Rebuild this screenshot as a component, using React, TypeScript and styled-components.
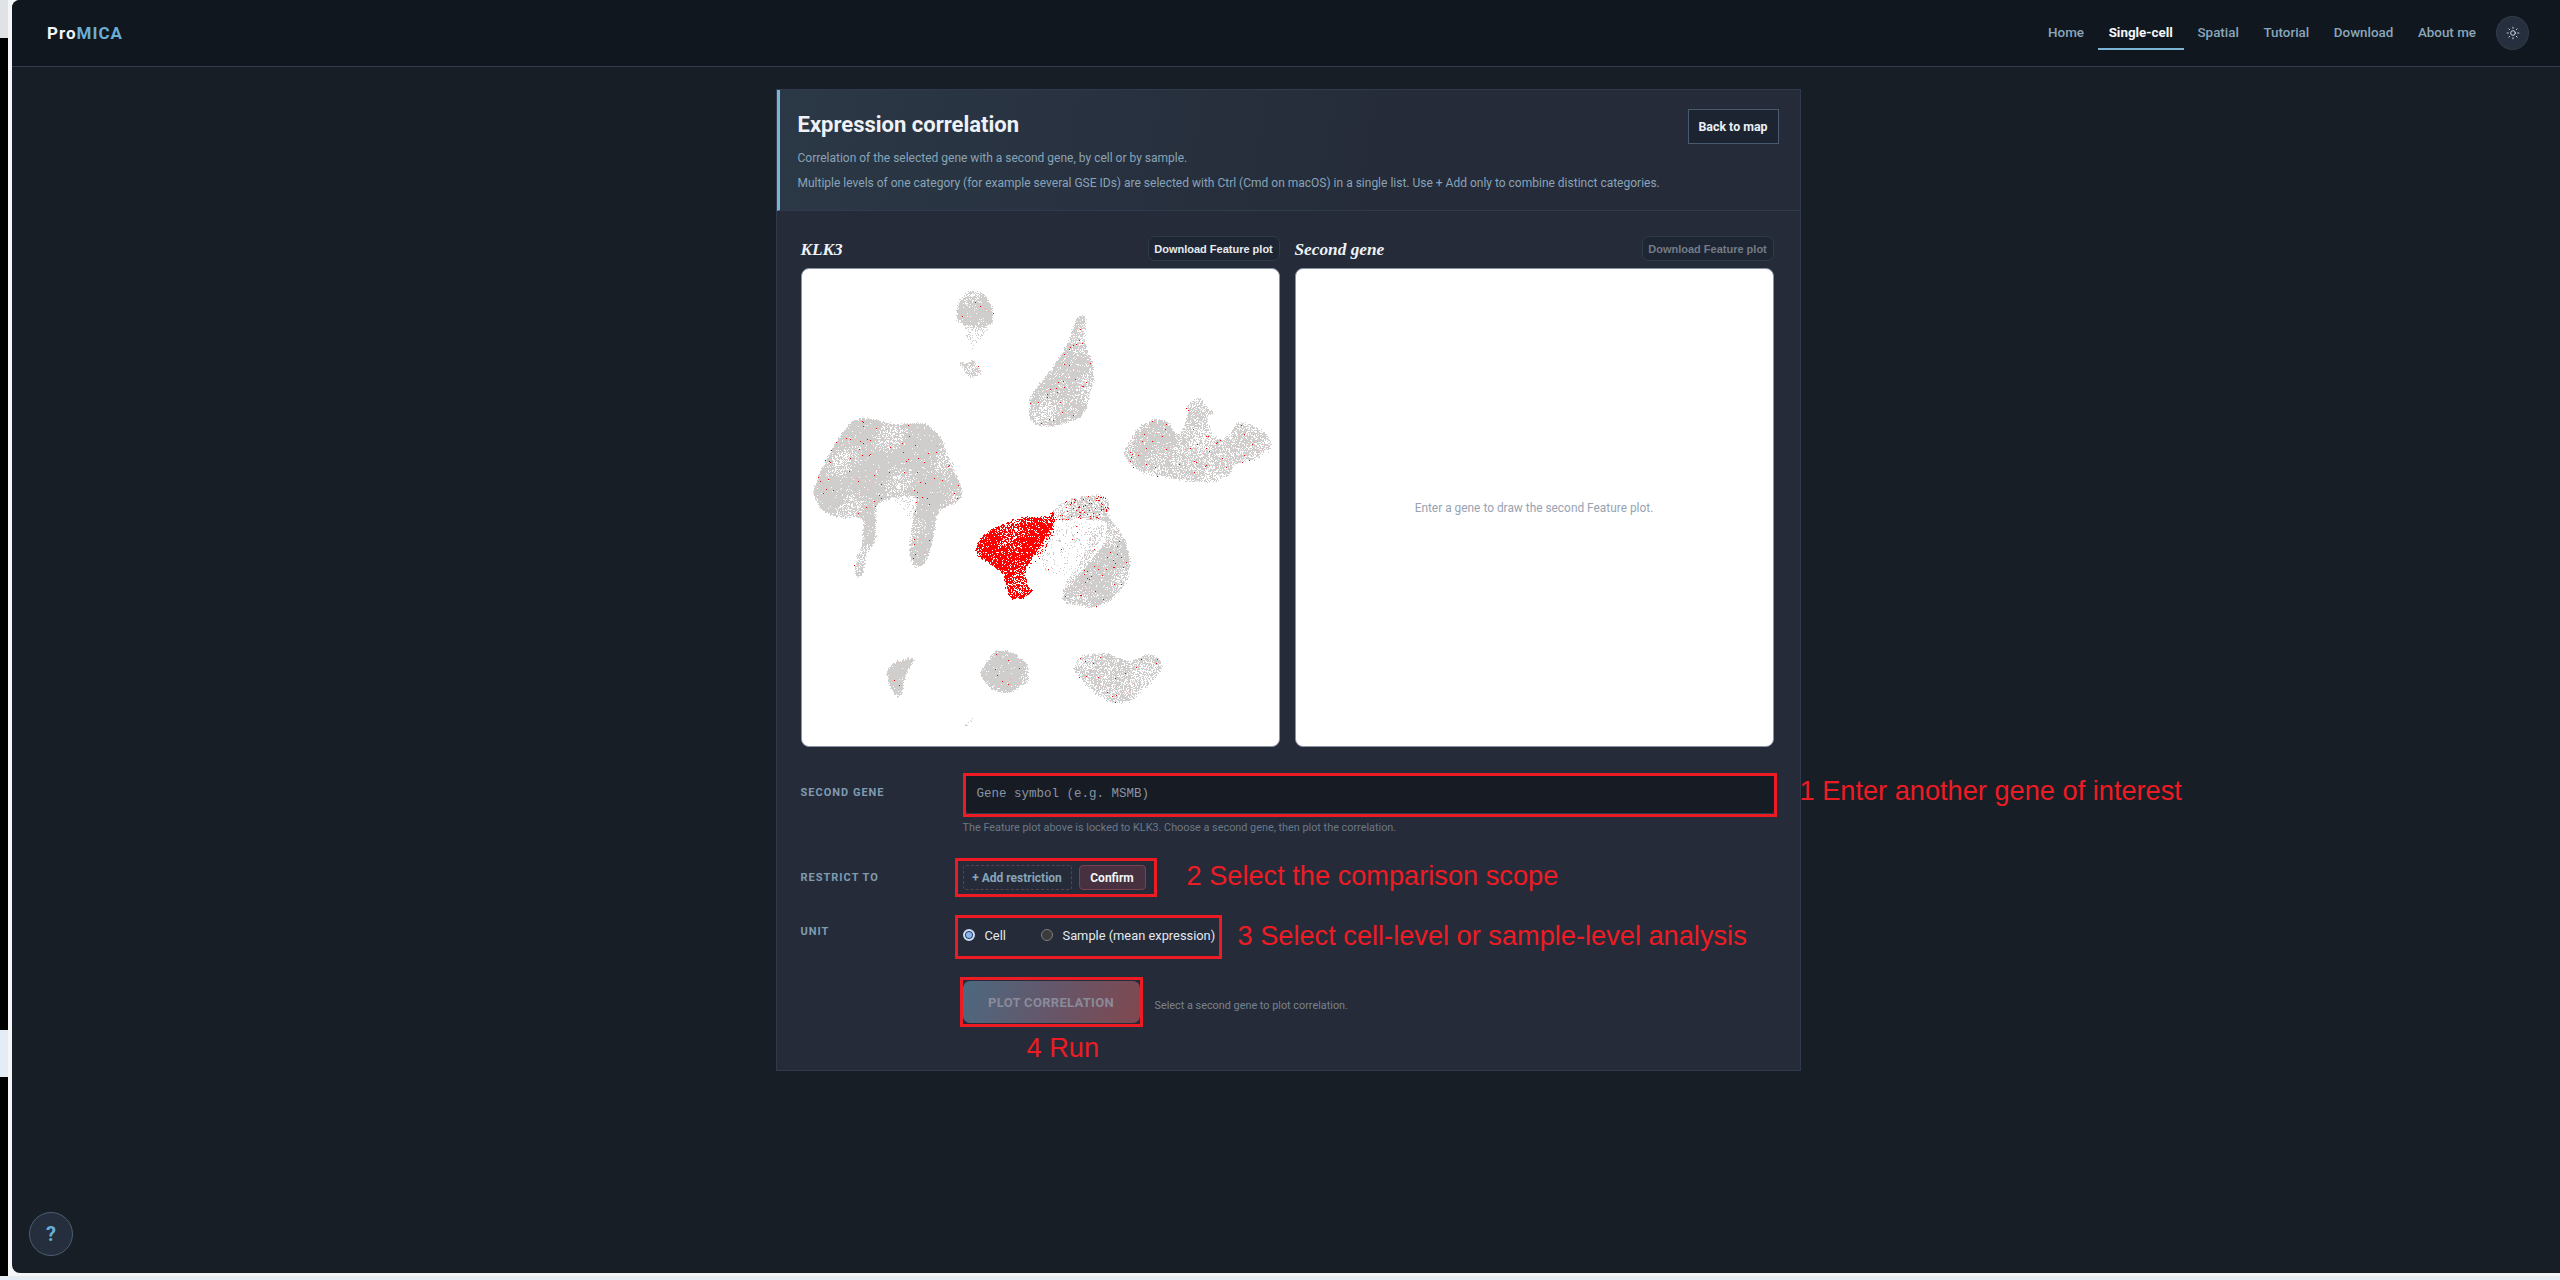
import { Sun } from 'lucide-react';
import styled, { createGlobalStyle } from 'styled-components';

const sans = 'Roboto, "Noto Sans", sans-serif';

const GlobalStyle = createGlobalStyle`
  html, body {
    margin: 0;
    padding: 0;
    background: #e4ecf5;
    overflow: hidden;
  }
  * {
    box-sizing: border-box;
  }
`;

const Screen = styled.div`
  width: 2560px;
  height: 1280px;
  display: flex;
  flex-direction: column;
  font-family: ${sans};
`;

const ScreenRow = styled.div`
  height: 1276px;
  display: flex;
  flex: none;
`;

const EdgeStrip = styled.div`
  width: 8px;
  flex: none;
  display: flex;
  flex-direction: column;
  background: #000;
`;

const EdgeTop = styled.div`
  height: 38px;
  background: #dfe3e6;
`;

const EdgeTab = styled.div`
  height: 47px;
  margin-top: 992px;
  background: #e4ecf5;
`;

const Frame = styled.div`
  flex: 1;
  background: #f4f6f8;
  padding: 0 0 3px 4px;
  display: flex;
`;

const Window = styled.div`
  flex: 1;
  display: flex;
  flex-direction: column;
  position: relative;
  border-radius: 8px 0 0 8px;
  overflow: hidden;
  background: #171e26;
`;

const Nav = styled.header`
  height: 67px;
  flex: none;
  display: flex;
  align-items: center;
  justify-content: space-between;
  padding: 0 31px 0 35px;
  background: #10171f;
  border-bottom: 1px solid #323b4e;
`;

const Brand = styled.div`
  font-size: 17px;
  font-weight: 700;
  letter-spacing: 1px;
  color: #f2f5f8;
  span {
    color: #6aaed6;
  }
`;

const NavRight = styled.div`
  display: flex;
  align-items: center;
`;

const NavLink = styled.a<{ $active?: boolean }>`
  height: 34px;
  display: flex;
  align-items: center;
  padding: 0 11px;
  margin-left: 2.6px;
  font-size: 13.4px;
  font-weight: ${(props) => (props.$active ? 700 : 500)};
  color: ${(props) => (props.$active ? '#f4f7fa' : '#8ba6bb')};
  border-bottom: 2px solid ${(props) => (props.$active ? '#7cb4d6' : 'transparent')};
`;

const ThemeButton = styled.button`
  width: 33px;
  height: 34px;
  margin-left: 9px;
  padding: 0;
  display: flex;
  align-items: center;
  justify-content: center;
  border-radius: 50%;
  color: #dfe6ec;
  background: #262f3d;
  border: 1px solid #303a4b;
`;

const Main = styled.main`
  flex: 1;
  display: flex;
  justify-content: center;
  padding: 22px 0 0 4px;
`;

const Card = styled.section`
  width: 1025px;
  height: 982px;
  background: #252b39;
  border: 1px solid #2f3b4c;
`;

const CardHeader = styled.div`
  height: 121px;
  display: flex;
  justify-content: space-between;
  padding: 19px 21px 0 18px;
  border-left: 3px solid #7cb4d6;
  border-bottom: 1px solid #2f3b4c;
  background: linear-gradient(100deg, #2b3846 0%, #252b39 60%);
`;

const Title = styled.h1`
  margin: 1px 0 9px;
  font-size: 22px;
  line-height: 30px;
  font-weight: 700;
  color: #eef2f6;
`;

const Lead = styled.p`
  margin: 0 0 7px;
  font-size: 12px;
  line-height: 18px;
  white-space: nowrap;
  color: #88a4b8;
`;

const BackButton = styled.button`
  width: 91px;
  height: 35px;
  flex: none;
  padding: 0;
  font-family: ${sans};
  font-size: 12.4px;
  font-weight: 700;
  white-space: nowrap;
  color: #eaf0f5;
  background: #1d2431;
  border: 1px solid #4a5a6e;
`;

const CardBody = styled.div`
  padding: 25px 25px 0 24px;
`;

const Plots = styled.div`
  display: grid;
  grid-template-columns: 479px 479px;
  gap: 15px;
  margin-bottom: 26px;
`;

const PlotHead = styled.div`
  height: 25px;
  margin-bottom: 7px;
  display: flex;
  align-items: center;
  justify-content: space-between;
`;

const PlotName = styled.h2`
  margin: 2px 0 0;
  font-family: 'Liberation Serif', serif;
  font-size: 17.3px;
  font-style: italic;
  font-weight: 700;
  color: #eef2f6;
`;

const DownloadButton = styled.button<{ disabled?: boolean }>`
  width: 132px;
  height: 25px;
  padding: 0;
  font-family: 'Liberation Sans', Arial, sans-serif;
  font-size: 11px;
  font-weight: 700;
  color: ${(props) => (props.disabled ? '#737b87' : '#e6ebf0')};
  background: #1f2633;
  border: 1px solid #2f3a4b;
  border-radius: 7px;
`;

const PlotBox = styled.div`
  width: 479px;
  height: 479px;
  display: flex;
  align-items: center;
  justify-content: center;
  background: #fff;
  border: 1px solid #8a93a5;
  border-radius: 8px;
  overflow: hidden;
  font-size: 11.9px;
  color: #98a3b3;
`;

const FormRow = styled.div<{ $top: number }>`
  display: grid;
  grid-template-columns: 162px 1fr;
  align-items: start;
  margin-top: ${(props) => props.$top}px;
`;

const FieldLabel = styled.label<{ $pad: number }>`
  padding-top: ${(props) => props.$pad}px;
  font-size: 11px;
  line-height: 14px;
  font-weight: 700;
  letter-spacing: 1px;
  color: #7f9bb0;
`;

const Inline = styled.div`
  display: flex;
  align-items: center;
`;

const Marked = styled.div<{ $inset: number; $height: number; $width: number }>`
  position: relative;
  display: flex;
  align-items: center;
  height: ${(props) => props.$height}px;
  width: ${(props) => props.$width}px;
  flex: none;
  gap: 7px;
  margin-left: ${(props) => props.$inset}px;
  padding-left: ${(props) => Math.max(0, -props.$inset - 3)}px;
  border: 3px solid #ed1c24;
`;

const Note = styled.span<{ $left?: number; $lift?: number }>`
  margin-left: ${(props) => props.$left || 0}px;
  margin-bottom: ${(props) => props.$lift || 0}px;
  font-family: 'Liberation Sans', Arial, sans-serif;
  font-size: 27.2px;
  line-height: 30px;
  color: #ed1c24;
  white-space: nowrap;
`;

const NoteOutside = styled(Note)`
  position: absolute;
  left: 100%;
  top: 0;
  margin-left: 26px;
`;

const NoteBelow = styled(Note)`
  position: absolute;
  top: 100%;
  left: 64px;
  margin-top: 9px;
`;

const GeneInput = styled.input`
  width: 808px;
  height: 38px;
  padding: 0 11px 1px;
  font-family: 'Liberation Mono', monospace;
  font-size: 12.5px;
  color: #e0e6ed;
  background: #161b24;
  border: none;
  border-bottom: 1px solid #2f3a4b;
  border-radius: 0 0 4px 4px;
  outline: none;
  &::placeholder {
    color: #8a95a5;
  }
`;

const Hint = styled.p`
  margin: 3px 0 0;
  font-size: 10.85px;
  line-height: 16px;
  color: #6c7888;
`;

const AddButton = styled.button`
  width: 109px;
  height: 25px;
  padding: 0;
  font-family: ${sans};
  font-size: 12px;
  font-weight: 700;
  color: #88a4b8;
  background: transparent;
  border: 1px dashed #5d3f52;
  border-radius: 3px;
`;

const ConfirmButton = styled.button`
  width: 67px;
  height: 25px;
  padding: 0;
  font-family: ${sans};
  font-size: 12px;
  font-weight: 700;
  color: #f2f5f8;
  background: #47303f;
  border: 1px solid #7b4152;
  border-radius: 4px;
`;

const RadioLabel = styled.label<{ $width: number }>`
  display: flex;
  align-items: center;
  gap: 10px;
  width: ${(props) => props.$width}px;
  margin-bottom: 4px;
  font-size: 12.85px;
  white-space: nowrap;
  color: #e4e9ef;
`;

const RadioDot = styled.span<{ $checked?: boolean }>`
  width: 12px;
  height: 12px;
  flex: none;
  border-radius: 50%;
  background: ${(props) => (props.$checked ? '#8ab4f0' : '#3b3b3b')};
  border: ${(props) => (props.$checked ? '2px solid #c8dcf6' : '1px solid #7d7d7d')};
  box-shadow: ${(props) => (props.$checked ? 'inset 0 0 0 1px #2b3a55' : 'none')};
`;

const PlotButton = styled.button`
  width: 177px;
  height: 42px;
  padding: 0;
  font-family: ${sans};
  font-size: 13px;
  font-weight: 700;
  letter-spacing: 0.3px;
  color: #8a8b9a;
  background: linear-gradient(110deg, #4b6980 0%, #65566a 50%, #80484f 100%);
  border: none;
  border-radius: 7px;
`;

const RunHint = styled.span`
  margin: 6px 0 0 12px;
  font-size: 10.85px;
  color: #77838f;
`;

const HelpButton = styled.button`
  position: absolute;
  left: 17px;
  bottom: 17px;
  width: 44px;
  height: 44px;
  padding: 0;
  font-family: ${sans};
  font-size: 20px;
  font-weight: 700;
  color: #6aaed6;
  background: #242e3c;
  border: 1px solid #4b5e72;
  border-radius: 50%;
`;

const BottomLine = styled.div`
  height: 1px;
  background: #e8eaec;
`;

// umap clusters, in plot pixels x3 (traced from the picture)
interface Blob {
  pts: number[];
  density: number;
  red: number;
}

const blobs: Blob[] = [
  // big left cluster and its two legs
  { pts: [32,665,66,585,116,495,156,450,206,447,266,465,366,462,411,495,446,575,481,665,476,695,406,725,386,845,361,890,336,895,321,855,331,755,346,680,290,680,230,700,220,715,221,815,191,855,181,925,161,920,156,880,181,825,186,745,100,745,51,715], density: 1, red: 0.012 },
  { pts: [270,680,345,640,380,640,370,760,320,760,300,710], density: 0.18, red: 0.01 },
  // top circle
  { pts: [463,140,471,90,506,65,546,75,571,115,571,165,546,175,500,170,466,155], density: 1, red: 0.01 },
  { pts: [480,160,565,165,530,220,505,240,490,190], density: 0.32, red: 0.005 },
  { pts: [471,275,496,285,509,270,541,310,516,325,491,315], density: 0.7, red: 0.02 },
  // triangle
  { pts: [826,140,851,140,846,215,881,315,846,440,766,470,706,470,679,445,686,375,746,305,791,235], density: 0.92, red: 0.016 },
  // right cluster, dense lobe first
  { pts: [1000,500,1060,450,1100,460,1125,520,1100,600,1000,600], density: 0.85, red: 0.015 },
  { pts: [961,555,1006,475,1056,450,1096,455,1131,505,1156,445,1156,405,1191,383,1206,405,1236,430,1216,445,1226,495,1266,515,1311,455,1366,475,1406,505,1406,540,1366,570,1296,585,1276,625,1246,635,1176,640,1096,625,1026,615,986,585], density: 0.72, red: 0.02 },
  // red cluster tail (grey with many red dots)
  { pts: [750,730,770,705,816,687,896,675,921,695,921,745,900,760,830,745,770,760], density: 0.72, red: 0.2 },
  // crescent below it
  { pts: [900,745,921,745,966,805,986,875,976,935,926,995,866,1017,796,1005,778,985,816,935,866,875,905,825,916,770], density: 0.97, red: 0.016 },
  { pts: [876,770,916,770,866,875,816,935,778,985,790,940,840,870], density: 0.35, red: 0.02 },
  { pts: [756,765,876,755,881,825,846,875,786,925,726,905,706,855], density: 0.1, red: 0.1 },
  // spray on the right of the red cluster, all red
  { pts: [686,775,766,735,756,805,706,875,666,905], density: 0.25, red: 2 },
  // bottom row
  { pts: [254,1205,276,1180,341,1162,311,1215,296,1285,281,1280,261,1250], density: 1, red: 0.008 },
  { pts: [531,1215,576,1145,626,1145,676,1185,684,1235,616,1275,566,1260], density: 1, red: 0.01 },
  { pts: [814,1200,836,1160,906,1150,986,1180,1036,1155,1076,1170,1081,1200,1046,1240,986,1300,926,1300,866,1265,836,1230], density: 0.74, red: 0.018 },
  { pts: [488,1370,511,1345,514,1348,492,1372], density: 0.6, red: 0 },
];

const solidRed = [519,835,541,800,586,770,656,745,726,745,756,725,751,775,726,815,696,855,666,905,681,960,696,960,666,987,626,990,611,955,606,915,556,880,526,860];

function inside(pts: number[], x: number, y: number) {
  let hit = false;
  for (let i = 0, j = pts.length - 2; i < pts.length; j = i, i += 2) {
    const yi = pts[i + 1];
    const yj = pts[j + 1];
    if (yi > y !== yj > y && x < ((pts[j] - pts[i]) * (y - yi)) / (yj - yi) + pts[i]) hit = !hit;
  }
  return hit;
}

// rounds the traced corners a little
function smooth(pts: number[]) {
  const out: number[] = [];
  for (let i = 0; i < pts.length; i += 2) {
    const j = (i + 2) % pts.length;
    out.push(pts[i] * 0.85 + pts[j] * 0.15, pts[i + 1] * 0.85 + pts[j + 1] * 0.15);
    out.push(pts[i] * 0.15 + pts[j] * 0.85, pts[i + 1] * 0.15 + pts[j + 1] * 0.85);
  }
  return out;
}

// one pixel of the plot is one square, grouped by colour so the svg stays 3 paths
function buildScatter() {
  let seed = 20240611;
  const rand = () => {
    seed = (seed * 1664525 + 1013904223) >>> 0;
    return seed / 4294967296;
  };
  const shapes = blobs.map((blob) => ({ ...blob, pts: smooth(blob.pts) }));
  const redShape = smooth(solidRed);
  let grey = '';
  let pink = '';
  let red = '';
  for (let y = 0; y < 479; y++) {
    for (let x = 0; x < 479; x++) {
      // jitter makes the outline of a cluster fray like real points
      const px = x * 3 + 1 + (rand() - 0.5) * 7;
      const py = y * 3 + 1 + (rand() - 0.5) * 7;
      const cell = `M${x} ${y}h1v1h-1z`;
      // patches where the cells thin out
      const patch = Math.max(0, Math.sin(x * 0.09 + y * 0.05 + 1) * Math.sin(y * 0.07 - x * 0.03 + 2));
      const wave = 0.97 - 0.4 * patch;
      if (inside(redShape, px, py)) {
        if (rand() < 0.92 * wave) red += cell;
        continue;
      }
      let colour = 0;
      for (const blob of shapes) {
        if (!inside(blob.pts, px, py)) continue;
        if (rand() > blob.density * wave) continue;
        const roll = rand();
        if (roll < blob.red * 0.5) colour = 3;
        else if (roll < blob.red) colour = 2;
        else colour = 1;
        break;
      }
      if (colour === 1) grey += cell;
      if (colour === 2) pink += cell;
      if (colour === 3) red += cell;
    }
  }
  return { grey, pink, red };
}

const scatter = buildScatter();

function FeaturePlot() {
  return (
    <svg width="477" height="477" viewBox="0 0 477 477" shapeRendering="crispEdges">
      <path d={scatter.grey} fill="#d0cdcd" />
      <path d={scatter.pink} fill="#e7aeae" />
      <path d={scatter.red} fill="#ff0000" />
    </svg>
  );
}

const navItems = ['Home', 'Single-cell', 'Spatial', 'Tutorial', 'Download', 'About me'];

function App() {
  return (
    <Screen>
      <GlobalStyle />
      <ScreenRow>
        <EdgeStrip>
          <EdgeTop />
          <EdgeTab />
        </EdgeStrip>
        <Frame>
          <Window>
            <Nav>
              <Brand>
                Pro<span>MICA</span>
              </Brand>
              <NavRight>
                {navItems.map((item) => (
                  <NavLink key={item} $active={item === 'Single-cell'}>
                    {item}
                  </NavLink>
                ))}
                <ThemeButton>
                  <Sun size={14} strokeWidth={1.5} />
                </ThemeButton>
              </NavRight>
            </Nav>
            <Main>
              <Card>
                <CardHeader>
                  <div>
                    <Title>Expression correlation</Title>
                    <Lead>Correlation of the selected gene with a second gene, by cell or by sample.</Lead>
                    <Lead>
                      Multiple levels of one category (for example several GSE IDs) are selected with Ctrl (Cmd on
                      macOS) in a single list. Use + Add only to combine distinct categories.
                    </Lead>
                  </div>
                  <BackButton>Back to map</BackButton>
                </CardHeader>
                <CardBody>
                  <Plots>
                    <div>
                      <PlotHead>
                        <PlotName>KLK3</PlotName>
                        <DownloadButton>Download Feature plot</DownloadButton>
                      </PlotHead>
                      <PlotBox>
                        <FeaturePlot />
                      </PlotBox>
                    </div>
                    <div>
                      <PlotHead>
                        <PlotName>Second gene</PlotName>
                        <DownloadButton disabled>Download Feature plot</DownloadButton>
                      </PlotHead>
                      <PlotBox>Enter a gene to draw the second Feature plot.</PlotBox>
                    </div>
                  </Plots>

                  <FormRow $top={0}>
                    <FieldLabel $pad={13}>SECOND GENE</FieldLabel>
                    <div>
                      <Marked $inset={0} $height={44} $width={814}>
                        <GeneInput placeholder="Gene symbol (e.g. MSMB)" />
                        <NoteOutside>1 Enter another gene of interest</NoteOutside>
                      </Marked>
                      <Hint>The Feature plot above is locked to KLK3. Choose a second gene, then plot the correlation.</Hint>
                    </div>
                  </FormRow>

                  <FormRow $top={22}>
                    <FieldLabel $pad={13}>RESTRICT TO</FieldLabel>
                    <Inline>
                      <Marked $inset={-8} $height={39} $width={202}>
                        <AddButton>+ Add restriction</AddButton>
                        <ConfirmButton>Confirm</ConfirmButton>
                      </Marked>
                      <Note $left={30} $lift={4}>2 Select the comparison scope</Note>
                    </Inline>
                  </FormRow>

                  <FormRow $top={18}>
                    <FieldLabel $pad={10}>UNIT</FieldLabel>
                    <Inline>
                      <Marked $inset={-8} $height={44} $width={267}>
                        <RadioLabel $width={71}>
                          <RadioDot $checked />
                          Cell
                        </RadioLabel>
                        <RadioLabel $width={165}>
                          <RadioDot />
                          Sample (mean expression)
                        </RadioLabel>
                      </Marked>
                      <Note $left={16} $lift={3}>3 Select cell-level or sample-level analysis</Note>
                    </Inline>
                  </FormRow>

                  <FormRow $top={18}>
                    <span />
                    <Inline>
                      <Marked $inset={-3} $height={50} $width={183}>
                        <PlotButton disabled>PLOT CORRELATION</PlotButton>
                        <NoteBelow>4 Run</NoteBelow>
                      </Marked>
                      <RunHint>Select a second gene to plot correlation.</RunHint>
                    </Inline>
                  </FormRow>
                </CardBody>
              </Card>
            </Main>
            <HelpButton>?</HelpButton>
          </Window>
        </Frame>
      </ScreenRow>
      <BottomLine />
    </Screen>
  );
}

export default App;
